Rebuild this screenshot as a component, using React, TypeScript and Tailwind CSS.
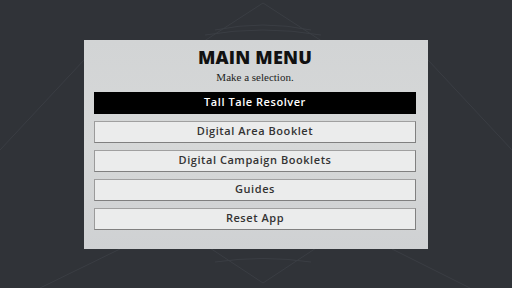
import React from 'react';

const items = [
    { label: 'Tall Tale Resolver', active: true },
    { label: 'Digital Area Booklet' },
    { label: 'Digital Campaign Booklets' },
    { label: 'Guides' },
    { label: 'Reset App' },
];

export default function App() {
    return (
        <div className="relative w-[512px] h-[288px] overflow-hidden bg-[#303338] flex items-center justify-center">
            {/* faint background ornament */}
            <svg className="absolute inset-0" width="512" height="288" viewBox="0 0 512 288" fill="none">
                <g stroke="#474b52" strokeWidth="1" opacity="0.45">
                    <path d="M263 3 L175 60 M263 3 L351 60" />
                    <path d="M215 30 Q263 20 311 30" />
                    <path d="M205 35 Q263 25 321 35" />
                    <path d="M263 283 L175 225 M263 283 L351 225" />
                    <path d="M215 262 Q263 255 311 262" />
                    <path d="M0 150 L84 60 M428 60 L512 150" />
                    <path d="M40 288 L120 249 M392 249 L470 288" />
                </g>
            </svg>

            <div className="relative w-[344px] h-[209px] bg-gradient-to-b from-[#d2d4d5] via-[#d6d8d8] to-[#cfd1d3] pt-[5px] pl-[10px] pr-[12px] flex flex-col">
                <h1
                    className="text-center text-[18px] leading-[24px] font-extrabold text-[#111] tracking-[0.01em]"
                    style={{ fontFamily: '"Open Sans", "Liberation Sans", sans-serif' }}
                >
                    MAIN MENU
                </h1>
                <p
                    className="text-center text-[11px] leading-[15px] text-[#222] mt-[1px]"
                    style={{ fontFamily: '"Liberation Serif", serif' }}
                >
                    Make a selection.
                </p>
                <div className="mt-[7px] flex flex-col gap-[7px]">
                    {items.map(item => (
                        <button
                            key={item.label}
                            className={`h-[22px] w-full flex items-center justify-center text-[11px] font-semibold tracking-[0.05em] ${
                                item.active
                                    ? 'bg-black text-white border border-black'
                                    : 'bg-[#ebecec] text-[#333] border border-[#808080] border-l-[#9a9a9a] border-t-[#a0a0a0]'
                            }`}
                            style={{ fontFamily: '"Open Sans", "Liberation Sans", sans-serif' }}
                        >
                            {item.label}
                        </button>
                    ))}
                </div>
            </div>
        </div>
    );
}
